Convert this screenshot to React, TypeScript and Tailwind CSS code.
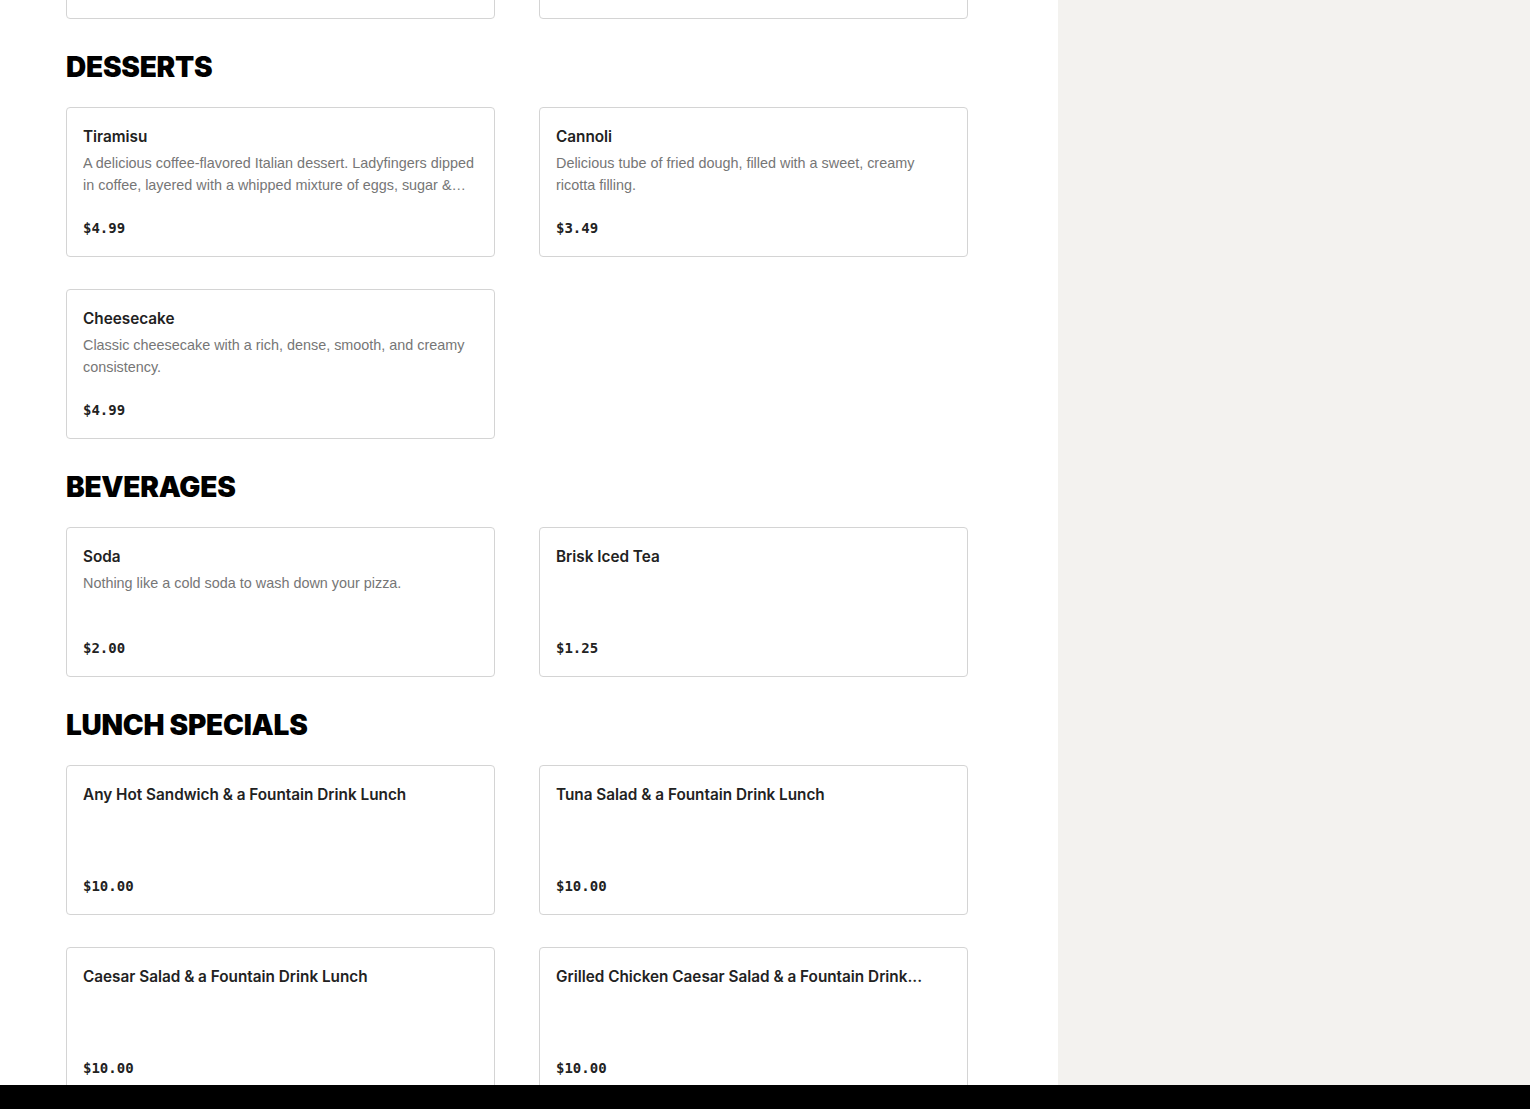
import React from 'react';

interface MenuItem {
  name: string;
  description?: string;
  price: string;
}

interface MenuSection {
  title: string;
  items: MenuItem[];
}

const sections: MenuSection[] = [
  {
    title: 'DESSERTS',
    items: [
      {
        name: 'Tiramisu',
        description:
          'A delicious coffee-flavored Italian dessert. Ladyfingers dipped in coffee, layered with a whipped mixture of eggs, sugar & mascarpone cheese, flavored with cocoa.',
        price: '$4.99',
      },
      {
        name: 'Cannoli',
        description: 'Delicious tube of fried dough, filled with a sweet, creamy ricotta filling.',
        price: '$3.49',
      },
      {
        name: 'Cheesecake',
        description: 'Classic cheesecake with a rich, dense, smooth, and creamy consistency.',
        price: '$4.99',
      },
    ],
  },
  {
    title: 'BEVERAGES',
    items: [
      { name: 'Soda', description: 'Nothing like a cold soda to wash down your pizza.', price: '$2.00' },
      { name: 'Brisk Iced Tea', price: '$1.25' },
    ],
  },
  {
    title: 'LUNCH SPECIALS',
    items: [
      { name: 'Any Hot Sandwich & a Fountain Drink Lunch', price: '$10.00' },
      { name: 'Tuna Salad & a Fountain Drink Lunch', price: '$10.00' },
      { name: 'Caesar Salad & a Fountain Drink Lunch', price: '$10.00' },
      { name: 'Grilled Chicken Caesar Salad & a Fountain Drink...', price: '$10.00' },
    ],
  },
];

function ItemCard({ item }: { item?: MenuItem }) {
  return (
    <div className="flex h-[150px] flex-col rounded border border-[#d4d4d4] bg-white px-4 pt-[17px] pb-4">
      {item && (
        <>
          <h3 className="truncate font-['Inter',sans-serif] text-[15.3px] leading-6 font-semibold text-[#222]">
            {item.name}
          </h3>
          {item.description && (
            <p className="mt-[3px] line-clamp-2 font-['Liberation_Sans',sans-serif] text-[14.4px] leading-[22px] text-[#767676]">
              {item.description}
            </p>
          )}
          <div className="mt-auto font-['DejaVu_Sans_Mono',monospace] text-sm leading-6 font-bold text-[#222]">
            {item.price}
          </div>
        </>
      )}
    </div>
  );
}

export default function App() {
  return (
    <div className="flex h-[1109px] overflow-hidden bg-white">
      <main className="w-[1058px] shrink-0 bg-white pl-[66px]">
        <div className="-mt-[131px] flex w-[902px] flex-col gap-8">
          {/* tail end of the previous section */}
          <div className="grid grid-cols-2 gap-x-11 gap-y-8">
            <ItemCard />
            <ItemCard />
          </div>

          {sections.map((section) => (
            <section key={section.title}>
              <h2 className="mb-6 font-['Inter',sans-serif] text-[28px] leading-8 font-black tracking-[-0.25px] text-black">
                {section.title}
              </h2>
              <div className="grid grid-cols-2 gap-x-11 gap-y-8">
                {section.items.map((item) => (
                  <ItemCard key={item.name} item={item} />
                ))}
              </div>
            </section>
          ))}
        </div>
      </main>
      <aside className="flex-1 bg-[#f3f2ef]" />
      <div className="fixed inset-x-0 bottom-0 h-6 bg-black" />
    </div>
  );
}
